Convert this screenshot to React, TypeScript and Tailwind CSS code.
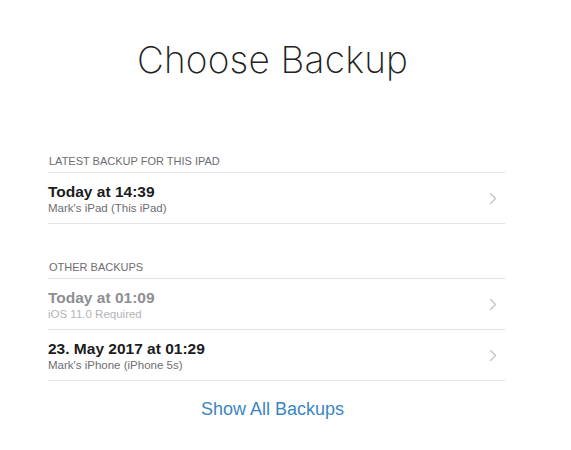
import React from "react";

const Chevron = () => (
  <svg width="8" height="13" viewBox="0 0 8 13" fill="none" className="shrink-0">
    <path d="M1.5 1.5 L6.5 6.5 L1.5 11.5" stroke="#c7c7cc" strokeWidth="1.5" strokeLinecap="round" strokeLinejoin="round" />
  </svg>
);

function Row({ title, sub, dim }: { title: string; sub: string; dim?: boolean }) {
  return (
    <div className="flex items-center h-[51px] border-b border-[#e4e4e6] pr-[8px]">
      <div className="flex-1 flex flex-col pt-[1px]">
        <div className={`text-[15.5px] leading-[19px] font-semibold ${dim ? "text-[#8e8e93]" : "text-[#1c1c1e]"}`}>{title}</div>
        <div className={`text-[11.5px] leading-[14px] ${dim ? "text-[#b4b4b8]" : "text-[#6d6d72]"}`}>{sub}</div>
      </div>
      <Chevron />
    </div>
  );
}

export default function App() {
  return (
    <div className="w-[571px] h-[450px] bg-white overflow-hidden" style={{ fontFamily: "'Liberation Sans', Arial, sans-serif" }}>
      <div className="pl-[48px] w-[505px]">
        <div className="pt-[38px] pr-[8px] text-center text-[37px] leading-[44px] text-[#222] tracking-[0.2px]" style={{ fontFamily: "Inter, 'Liberation Sans', sans-serif", fontWeight: 200 }}>
          Choose Backup
        </div>
        <div className="mt-[72px] text-[11px] leading-[14px] text-[#6d6d72] uppercase pl-[1px]">Latest Backup for this iPad</div>
        <div className="mt-[4px] border-t border-[#e4e4e6]">
          <Row title="Today at 14:39" sub="Mark's iPad (This iPad)" />
        </div>
        <div className="mt-[36px] text-[11px] leading-[14px] text-[#6d6d72] uppercase pl-[1px]">Other Backups</div>
        <div className="mt-[4px] border-t border-[#e4e4e6]">
          <Row title="Today at 01:09" sub="iOS 11.0 Required" dim />
          <Row title="23. May 2017 at 01:29" sub="Mark's iPhone (iPhone 5s)" />
        </div>
        <div className="mt-[18px] pr-[8px] text-center text-[18px] leading-[20px] text-[#3a86c5]">Show All Backups</div>
      </div>
    </div>
  );
}
